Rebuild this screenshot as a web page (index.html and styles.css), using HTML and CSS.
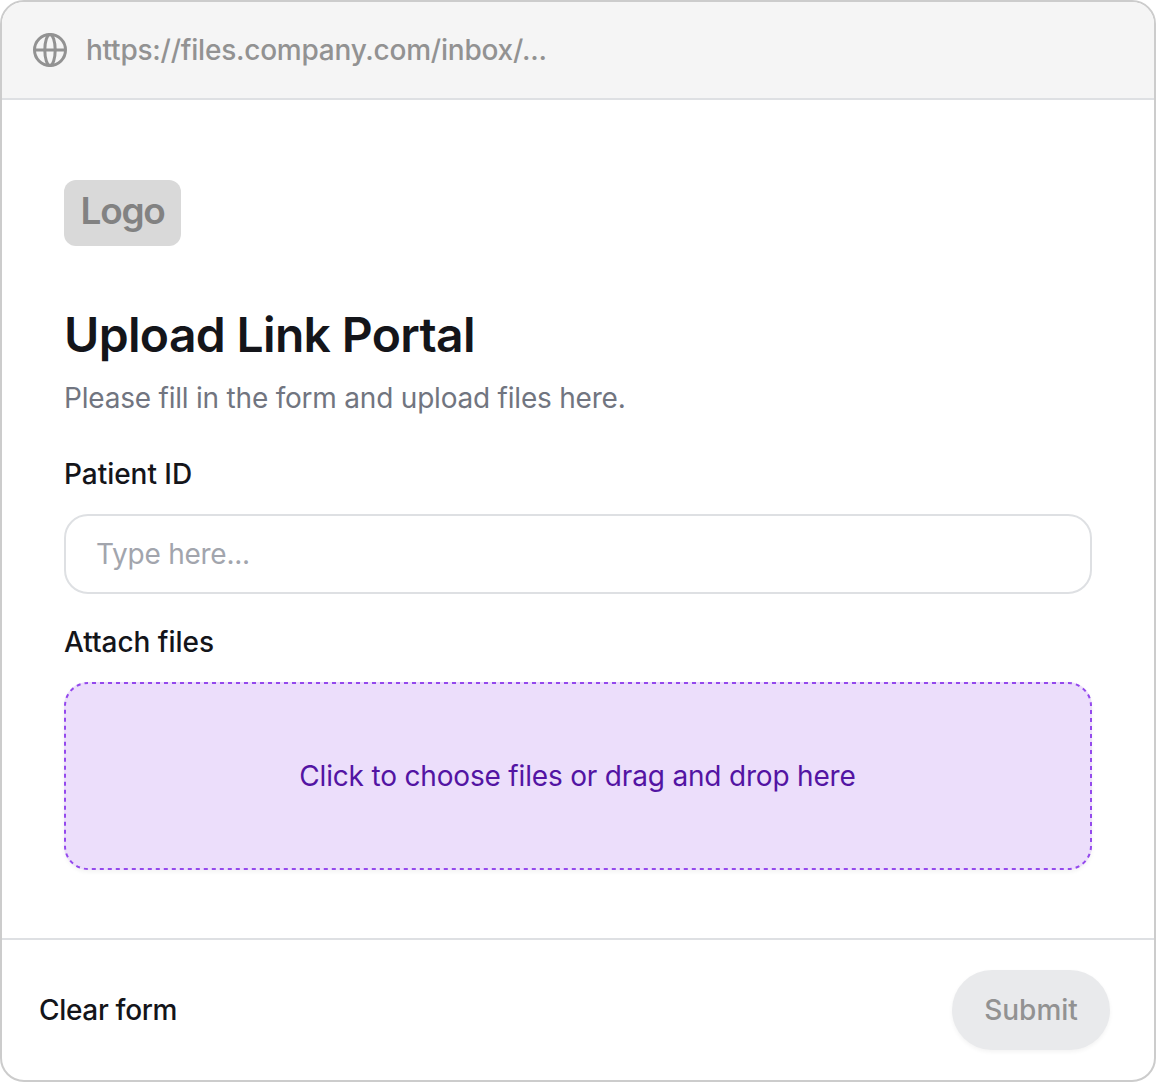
FILE: index.html
```html
<!DOCTYPE html>
<html lang="en">
<head>
<meta charset="utf-8">
<title>Upload Link Portal</title>
<link rel="stylesheet" href="styles.css">
</head>
<body>
<div class="window">
  <header class="address-bar">
    <svg class="globe" width="36" height="36" viewBox="0 0 36 36" fill="none" stroke="currentColor" stroke-width="3">
      <circle cx="18" cy="18" r="15.5"/>
      <ellipse cx="18" cy="18" rx="5.2" ry="15.5"/>
      <path d="M2.5 18h31"/>
    </svg>
    <span class="url">https://files.company.com/inbox/...</span>
  </header>
  <main class="content">
    <div class="logo"><span class="logo-text">Logo</span></div>
    <h1 class="title">Upload Link Portal</h1>
    <p class="subtitle">Please fill in the form and upload files here.</p>
    <label class="label" for="patient">Patient ID</label>
    <input class="field" id="patient" type="text" placeholder="Type here...">
    <div class="label">Attach files</div>
    <div class="dropzone">
      <svg class="dashes" width="1028" height="188" fill="none">
        <rect x="1" y="1" width="1026" height="186" rx="23"/>
      </svg>
      <span class="drop-text">Click to choose files or drag and drop here</span>
    </div>
  </main>
  <footer class="actions">
    <button class="clear" type="button">Clear form</button>
    <button class="submit" type="button">Submit</button>
  </footer>
</div>
</body>
</html>
```
FILE: styles.css
```css
* { box-sizing: border-box; }
body {
  margin: 0;
  background: #fff;
  font-family: Inter, "Liberation Sans", sans-serif;
  font-size: 28px;
  color: #14151a;
}
.window {
  display: flex;
  flex-direction: column;
  width: 1156px;
  height: 1082px;
  border: 2px solid #ccc;
  border-radius: 24px;
  overflow: hidden;
}
.address-bar {
  display: flex;
  align-items: center;
  gap: 18px;
  height: 98px;
  padding: 0 30px;
  background: #f5f5f5;
  border-bottom: 2px solid #dee0e3;
  color: #929292;
}
.globe { flex: none; }
.url { font-weight: 500; line-height: 40px; letter-spacing: -0.235px; }
.content {
  flex: 1;
  display: flex;
  flex-direction: column;
  padding: 80px 62px 0;
}
.logo {
  display: flex;
  justify-content: center;
  width: 117px;
  height: 65.5px;
  border-radius: 12px;
  background: #d9d9d9;
  color: #828282;
}
.logo-text {
  font-size: 37px;
  font-weight: 600;
  line-height: 61px;
  letter-spacing: -1.3px;
}
.title {
  margin: 57.5px 0 0;
  font-size: 48px;
  line-height: 64px;
  font-weight: 600;
  letter-spacing: -0.66px;
}
.subtitle {
  margin: 11px 0 36px;
  line-height: 40px;
  letter-spacing: -0.21px;
  color: #717580;
}
.label {
  margin-bottom: 20px;
  font-weight: 500;
  line-height: 40px;
  letter-spacing: -0.03px;
}
.field {
  height: 80px;
  margin: 0 0 28px;
  padding: 0 30px;
  border: 2px solid #dee0e3;
  border-radius: 24px;
  background: #fff;
  font: inherit;
  letter-spacing: -0.25px;
}
.field::placeholder { color: #a2a5ad; opacity: 1; }
.dropzone {
  position: relative;
  display: flex;
  align-items: center;
  justify-content: center;
  height: 188px;
  border-radius: 24px;
  background: #ecdefb;
  box-shadow: 0 2px 4px rgba(20, 21, 26, 0.05);
  color: #5314a3;
  letter-spacing: -0.18px;
}
.drop-text { margin-right: 1px; }
.dashes {
  position: absolute;
  inset: 0;
  stroke: #9449ed;
  stroke-width: 2;
  stroke-dasharray: 4 4;
  stroke-dashoffset: 4;
}
.actions {
  display: flex;
  align-items: center;
  justify-content: space-between;
  height: 142px;
  padding: 0 44px 0 37px;
  border-top: 2px solid #dee0e3;
}
.clear, .submit {
  border: 0;
  padding: 0;
  background: none;
  font: inherit;
  font-weight: 500;
  color: inherit;
}
.clear { letter-spacing: -0.32px; }
.submit {
  width: 158px;
  height: 80px;
  border-radius: 40px;
  background: #e9eaec;
  box-shadow: 0 2px 4px rgba(20, 21, 26, 0.05);
  color: #929292;
}
```
